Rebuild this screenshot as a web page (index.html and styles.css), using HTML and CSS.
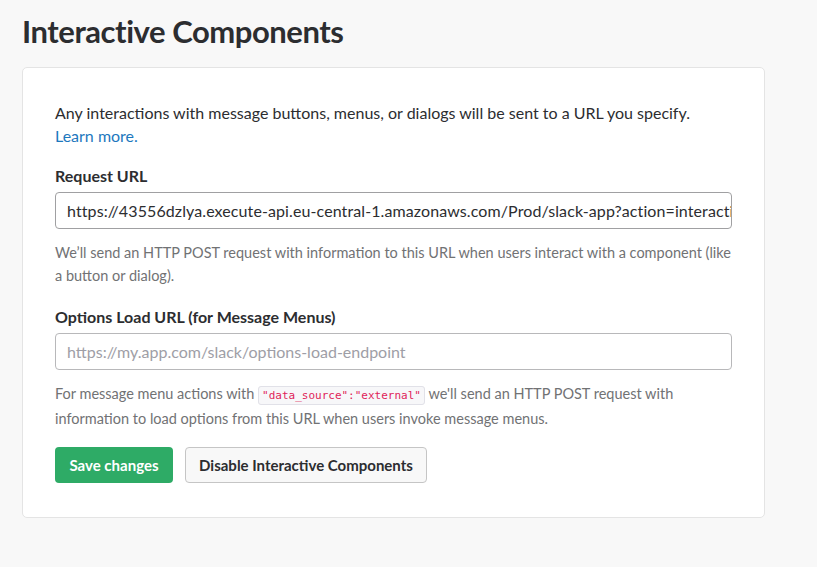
FILE: index.html
```html
<!DOCTYPE html>
<html>
<head>
<meta charset="utf-8">
<link rel="stylesheet" href="styles.css">
</head>
<body>
<div class="page">
  <h1 class="title">Interactive Components</h1>
  <div class="card">
    <p class="intro">Any interactions with message buttons, menus, or dialogs will be sent to a URL you specify. <a class="link" href="#">Learn more.</a></p>
    <label class="label">Request URL</label>
    <div class="input">https://43556dzlya.execute-api.eu-central-1.amazonaws.com/Prod/slack-app?action=interactive</div>
    <p class="help">We’ll send an HTTP POST request with information to this URL when users interact with a component (like a button or dialog).</p>
    <label class="label label-2">Options Load URL (for Message Menus)</label>
    <div class="input placeholder">https://my.app.com/slack/options-load-endpoint</div>
    <p class="help help-2">For message menu actions with <code class="code">"data_source":"external"</code> we'll send an HTTP POST request with information to load options from this URL when users invoke message menus.</p>
    <div class="actions">
      <button class="btn btn-primary">Save changes</button>
      <button class="btn btn-secondary">Disable Interactive Components</button>
    </div>
  </div>
</div>
</body>
</html>
```

FILE: styles.css
```css
html, body {
  margin: 0;
  padding: 0;
  background: #f8f8f8;
}
body {
  font-family: Lato, "Open Sans", sans-serif;
  color: #2c2d30;
}
.page {
  padding: 12px 52px 0 22px;
}
.title {
  margin: 0;
  font-size: 31px;
  font-weight: 700;
  line-height: 38px;
  color: #2c2d30;
  letter-spacing: -0.45px;
}
.card {
  margin-top: 17px;
  background: #fff;
  border: 1px solid #e4e4e4;
  border-radius: 5px;
  padding: 33px 32px 34px 32px;
  box-sizing: border-box;
  width: 743px;
}
.intro {
  margin: 0;
  font-size: 16px;
  line-height: 23px;
}
.link {
  color: #1d78be;
  text-decoration: none;
}
.label {
  display: block;
  margin-top: 17px;
  font-size: 16px;
  font-weight: 700;
  line-height: 23px;
}
.label-2 {
  margin-top: 18px;
}
.input {
  margin-top: 5px;
  height: 37px;
  box-sizing: border-box;
  border: 1px solid #a0a0a2;
  border-radius: 4px;
  padding: 0 11px;
  font-size: 16px;
  letter-spacing: 0.1px;
  line-height: 35px;
  white-space: nowrap;
  overflow: hidden;
  color: #2c2d30;
}
.placeholder {
  color: #9e9ea6;
  border-color: #b8b8ba;
  letter-spacing: 0;
}
.help {
  margin: 12px 0 0;
  font-size: 14.5px;
  line-height: 23px;
  color: #717274;
}
.help-2 {
  margin-top: 11px;
  line-height: 25px;
}
.code {
  font-family: "DejaVu Sans Mono", monospace;
  font-size: 11px;
  line-height: 1;
  color: #e01e5a;
  background: #f7f7f9;
  border: 1px solid #e1e1e8;
  border-radius: 3px;
  padding: 2px 3px;
}
.actions {
  display: flex;
  gap: 12px;
  margin-top: 16px;
}
.btn {
  font-family: Lato, "Open Sans", sans-serif;
  font-size: 15px;
  font-weight: 700;
  height: 36px;
  border-radius: 4px;
  padding: 0 13px;
  cursor: pointer;
}
.btn-primary {
  background: #2eab66;
  color: #fff;
  border: none;
  width: 118px;
}
.btn-secondary {
  background: #f8f8f8;
  color: #2c2d30;
  border: 1px solid #c5c5c5;
  width: 242px;
}
```
